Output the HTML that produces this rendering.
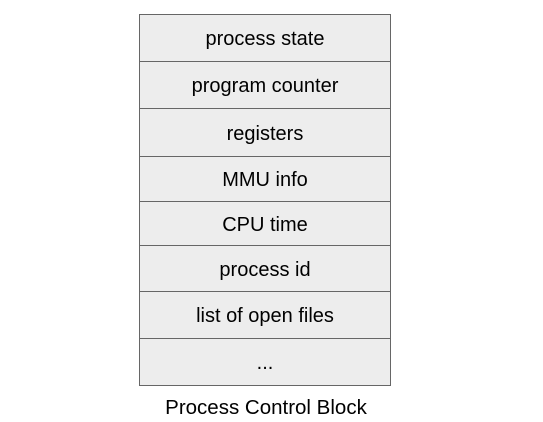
<!DOCTYPE html><html><head><style>
body{margin:0;width:543px;height:422px;background:#fff;font-family:"Liberation Sans",sans-serif;position:relative;overflow:hidden}
.r{position:absolute;left:139px;width:252px;background:#ededed;border:1px solid #666;text-align:center;font-size:20px;color:#000;box-sizing:border-box;display:flex;align-items:center;justify-content:center;padding-top:3px}
.c{position:absolute;left:139px;width:254px;top:396px;text-align:center;font-size:20.5px}
</style></head><body>
<div class="r" style="top:14px;height:48px">process state</div>
<div class="r" style="top:61px;height:48px">program counter</div>
<div class="r" style="top:108px;height:49px">registers</div>
<div class="r" style="top:156px;height:46px">MMU info</div>
<div class="r" style="top:201px;height:45px">CPU time</div>
<div class="r" style="top:245px;height:47px">process id</div>
<div class="r" style="top:291px;height:48px">list of open files</div>
<div class="r" style="top:338px;height:48px">...</div>
<div class="c">Process Control Block</div>
</body></html>
